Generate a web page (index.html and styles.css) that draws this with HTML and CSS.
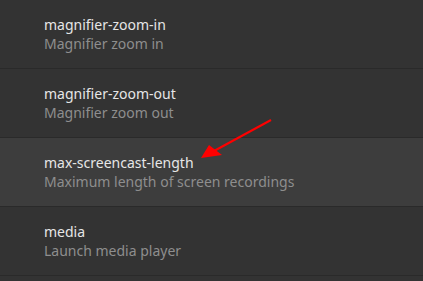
FILE: index.html
```html
<!DOCTYPE html>
<html lang="en">
<head>
    <meta charset="UTF-8">
    <title>Keyboard Shortcuts</title>
    <link rel="stylesheet" href="styles.css">
</head>
<body>

    <!-- shortcut list -->
    <div class="list">
        <div class="row">
            <div class="name">magnifier-zoom-in</div>
            <div class="desc">Magnifier zoom in</div>
        </div>
        <div class="row">
            <div class="name">magnifier-zoom-out</div>
            <div class="desc">Magnifier zoom out</div>
        </div>
        <div class="row selected">
            <div class="name">max-screencast-length</div>
            <div class="desc">Maximum length of screen recordings</div>
        </div>
        <div class="row">
            <div class="name">media</div>
            <div class="desc">Launch media player</div>
        </div>
        <div class="row rest"></div>
    </div>

    <!-- annotation arrow -->
    <svg class="arrow" width="423" height="281" viewBox="0 0 423 281">
        <line x1="271" y1="120" x2="214" y2="151" stroke="#ff0000" stroke-width="2"/>
        <polygon points="201,158 209,145 222,155" fill="#ff0000"/>
    </svg>

</body>
</html>
```

FILE: styles.css
```css
/* General Styles */
body, html {
    margin: 0;
    padding: 0;
    height: 100%;
    overflow: hidden;
    background: #333333;
    font-family: 'Noto Sans', sans-serif;
}

.list {
    display: flex;
    flex-direction: column;
    height: 100vh;
}

.row {
    height: 68px;
    border-bottom: 1px solid #2a2a2a;
    padding-left: 44px;
    display: flex;
    flex-direction: column;
    justify-content: center;
    flex-shrink: 0;
}

.row.selected {
    background: #3d3d3d;
}

.row.rest {
    height: auto;
    flex: 1;
    border-bottom: none;
}

.name {
    font-size: 14px;
    line-height: 19px;
    color: #e6e6e6;
}

.desc {
    font-size: 14px;
    line-height: 19px;
    color: #8e8e8e;
}

.arrow {
    position: absolute;
    top: 0;
    left: 0;
    pointer-events: none;
}
```
